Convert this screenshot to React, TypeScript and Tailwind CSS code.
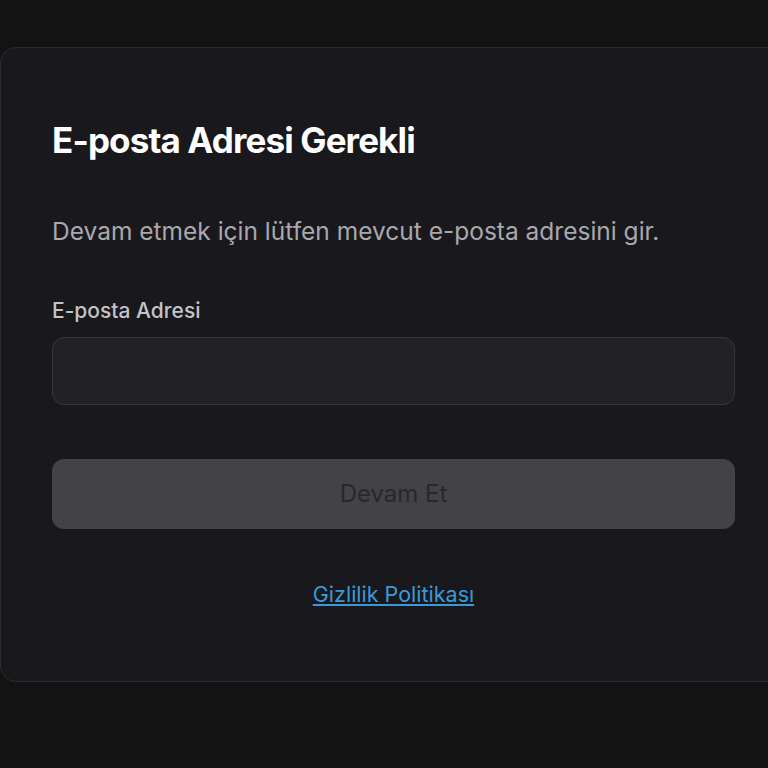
export default function App() {
  return (
    <div className="h-screen w-full overflow-hidden bg-[#131314] pt-[47px] font-['Inter',sans-serif]">
      <div className="h-[635px] w-[787px] shrink-0 rounded-2xl border border-[#2c2c30] bg-[#19181d] px-[51px] pt-[72px]">
        <h1 className="text-[35px] font-bold leading-[40px] tracking-[-0.025em] text-white">E-posta Adresi Gerekli</h1>
        <p className="mt-[55px] text-[24.5px] leading-[32px] text-[#a8a8ae]">
          Devam etmek için lütfen mevcut e-posta adresini gir.
        </p>
        <label className="mt-[50px] block text-[21px] font-medium leading-[28px] text-[#c4c4c8]">E-posta Adresi</label>
        <input
          type="email"
          className="mt-[12px] block h-[68px] w-full rounded-xl border border-[#36363b] bg-[#222226] px-4 text-[20px] text-white outline-none"
        />
        <button
          disabled
          className="mt-[54px] block h-[70px] w-full rounded-xl bg-[#434347] text-[24px] text-[#28282c]"
        >
          Devam Et
        </button>
        <div className="mt-[50px] text-center">
          <a href="#" className="text-[21.5px] leading-[30px] text-[#3a9ad9] underline underline-offset-2">
            Gizlilik Politikası
          </a>
        </div>
      </div>
    </div>
  );
}
